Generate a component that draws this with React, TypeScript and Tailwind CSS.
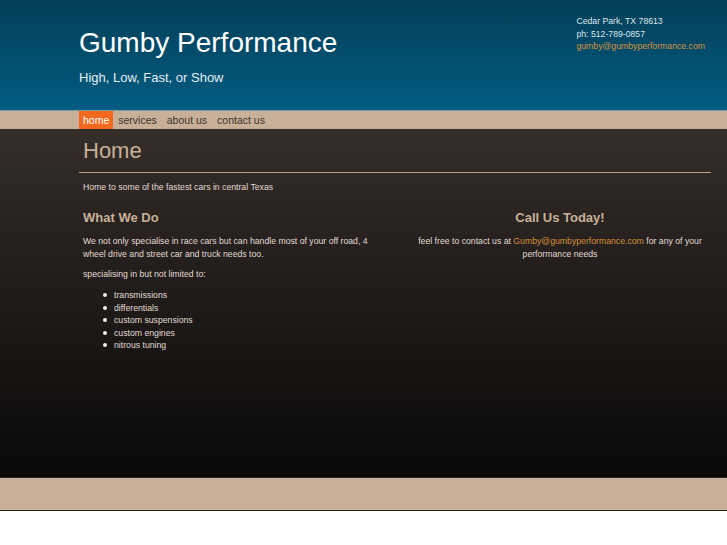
import React from "react";

const navItems = ["home", "services", "about us", "contact us"];

const services = [
  "transmissions",
  "differentials",
  "custom suspensions",
  "custom engines",
  "nitrous tuning",
];

export default function App() {
  return (
    <div className="min-h-[545px] bg-white font-['Liberation_Sans',Arial,sans-serif]">
      <header className="h-[110px] bg-gradient-to-b from-[#033f58] to-[#035c82]">
        <div className="flex justify-between pl-[79px] pr-[22px]">
          <div>
            <h1 className="pt-[26px] text-[28px] leading-[34px] text-white">Gumby Performance</h1>
            <p className="mt-[10px] text-[13px] leading-[16px] text-[#e6eef2]">High, Low, Fast, or Show</p>
          </div>
          <div className="pt-[15px] text-[8.7px] leading-[12.5px] text-[#dde6ea]">
            <p>Cedar Park, TX 78613</p>
            <p>ph: 512-789-0857</p>
            <p className="text-[#d7913a]">gumby@gumbyperformance.com</p>
          </div>
        </div>
      </header>

      <nav className="h-[19px] border-t border-[#7c9aa8] bg-[#c8b098]">
        <ul className="flex h-full pl-[79px] text-[10.5px] leading-[18px] text-[#3b332e]">
          {navItems.map((item, i) => (
            <li
              key={item}
              className={
                i === 0
                  ? "bg-[#f2691e] px-[4px] text-white"
                  : "px-[5px]"
              }
            >
              {item}
            </li>
          ))}
        </ul>
      </nav>

      <main className="h-[348px] bg-gradient-to-b from-[#352e2a] to-[#0a0908]">
        <div className="ml-[79px] mr-[16px]">
          <h2 className="pl-[4px] pt-[9px] pb-[9px] text-[22px] leading-[25px] text-[#c8b098]">Home</h2>
          <div className="h-px bg-[#b8a088]" />
          <p className="pl-[4px] pt-[8px] text-[8.7px] leading-[12px] text-[#e2dad2]">
            Home to some of the fastest cars in central Texas
          </p>
          <div className="mt-[17px] flex">
            <section className="w-[300px] pl-[4px] text-[8.7px] leading-[13px] text-[#e2dad2]">
              <h3 className="text-[13px] font-bold leading-[16px] text-[#c8b098]">What We Do</h3>
              <p className="mt-[9px]">
                We not only specialise in race cars but can handle most of your off road, 4 wheel drive and street car and truck needs too.
              </p>
              <p className="mt-[7px]">specialising in but not limited to:</p>
              <ul className="mt-[8px] pl-[20px] leading-[12.5px]">
                {services.map((s) => (
                  <li key={s} className="flex items-center gap-[7px]">
                    <span className="h-[4px] w-[4px] rounded-full bg-[#eee]" />
                    {s}
                  </li>
                ))}
              </ul>
            </section>
            <section className="flex-1 pl-[30px] text-center text-[8.7px] leading-[13px] text-[#e2dad2]">
              <h3 className="text-[13px] font-bold leading-[16px] text-[#c8b098]">Call Us Today!</h3>
              <p className="mt-[9px]">
                feel free to contact us at <span className="text-[#d7913a]">Gumby@gumbyperformance.com</span> for any of your performance needs
              </p>
            </section>
          </div>
        </div>
      </main>

      <footer className="h-[34px] border-y border-[#2a2320] bg-[#c8b098]" />
    </div>
  );
}
